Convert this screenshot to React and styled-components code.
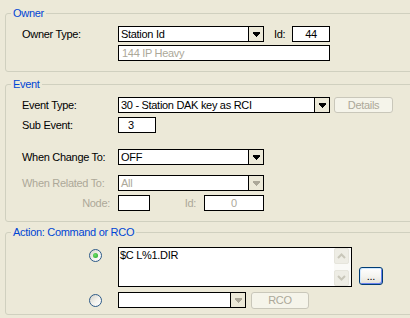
import React from 'react';
import styled, { createGlobalStyle, css } from 'styled-components';

const GlobalStyle = createGlobalStyle`
  html, body { margin: 0; padding: 0; background: #ECE9D8; overflow: hidden; }
  body {
    font-family: "Liberation Sans", Arial, sans-serif;
    font-size: 11px;
    letter-spacing: -0.3px;
    color: #000;
  }
  #root { width: 410px; height: 318px; overflow: hidden; }
`;

const Form = styled.div`
  display: flex;
  flex-direction: column;
  padding-top: 7px;
  width: 425px;
`;

const Group = styled.fieldset`
  box-sizing: border-box;
  width: 420px;
  min-width: 0;
  margin: ${(p) => p.$mt}px 0 0 5px;
  padding: ${(p) => p.$pt}px 0 ${(p) => p.$pb}px 0;
  border: 1px solid #D0D0BF;
  border-radius: 3px;
`;

const Legend = styled.legend`
  color: #0046D5;
  padding: 0 2px;
  margin-left: 5px;
  line-height: 13px;
  height: 13px;
`;

const Body = styled.div`
  display: flex;
  flex-direction: column;
  padding-left: 16px;
`;

const Row = styled.div`
  display: flex;
  align-items: ${(p) => p.$align || 'center'};
  height: ${(p) => p.$h || 16}px;
  margin-top: ${(p) => p.$mt || 0}px;
`;

const Label = styled.span`
  flex: none;
  box-sizing: border-box;
  width: ${(p) => p.$w || 96}px;
  padding-left: ${(p) => p.$pl || 0}px;
  padding-right: ${(p) => p.$pr || 0}px;
  text-align: ${(p) => (p.$right ? 'right' : 'left')};
  color: ${(p) => (p.$disabled ? '#ACA899' : '#000')};
  white-space: nowrap;
  line-height: 13px;
`;

const TextBox = styled.input`
  flex: none;
  box-sizing: border-box;
  width: ${(p) => p.$w}px;
  height: 16px;
  margin: 0;
  padding: 0 0 0 ${(p) => p.$pl || 0}px;
  border: 1px solid #000;
  border-radius: 0;
  background: #fff;
  font-family: inherit;
  font-size: 11px;
  letter-spacing: inherit;
  color: ${(p) => (p.$disabled ? '#ACA899' : '#000')};
  text-align: ${(p) => p.$align || 'left'};
  outline: none;
`;

const ComboBox = styled.div`
  flex: none;
  box-sizing: border-box;
  width: ${(p) => p.$w}px;
  height: 16px;
  border: 1px solid #000;
  background: #fff;
  display: flex;
`;

const ComboText = styled.span`
  flex: 1;
  min-width: 0;
  padding-left: 2px;
  line-height: 14px;
  white-space: nowrap;
  overflow: hidden;
  color: ${(p) => (p.$disabled ? '#ACA899' : '#000')};
`;

const ArrowBox = styled.span`
  flex: none;
  width: 14px;
  border-left: 1px solid #000;
  background: #ECE9D8;
  display: flex;
  align-items: center;
  justify-content: center;
`;

const Button = styled.button`
  flex: none;
  box-sizing: border-box;
  width: ${(p) => p.$w}px;
  height: ${(p) => p.$h || 16}px;
  margin: 0 0 ${(p) => p.$mb || 0}px ${(p) => p.$ml || 0}px;
  align-self: ${(p) => p.$self || 'auto'};
  padding: 0;
  border-radius: 3px;
  font-family: inherit;
  font-size: 11px;
  letter-spacing: inherit;
  line-height: 12px;
  ${(p) =>
    p.disabled
      ? css`
          border: 1px solid #C9C7BA;
          background: #F5F4EA;
          color: #ACA899;
        `
      : css`
          border: 1px solid #003C74;
          background: linear-gradient(#FFFFFF, #F4F3EE 55%, #E3E0D6);
          color: #000;
          box-shadow: inset 1px 1px 0 #CEE7FF, inset -1px -1px 0 #6982EE;
        `}
`;

const RadioCell = styled.span`
  flex: none;
  box-sizing: border-box;
  width: 96px;
  display: flex;
  justify-content: flex-end;
  padding-right: 16px;
  margin-top: ${(p) => p.$mt || 0}px;
`;

const Radio = styled.span`
  box-sizing: border-box;
  width: 13px;
  height: 13px;
  border-radius: 50%;
  border: 1px solid #2C5A88;
  background: linear-gradient(135deg, #D4D2C8 0%, #F4F3EE 55%, #FFFFFF 100%);
  display: flex;
  align-items: center;
  justify-content: center;
  &::after {
    content: '';
    display: ${(p) => (p.$checked ? 'block' : 'none')};
    width: 5px;
    height: 5px;
    border-radius: 50%;
    background: radial-gradient(circle at 40% 40%, #6FE06B, #21A121);
  }
`;

const MemoBox = styled.div`
  flex: none;
  box-sizing: border-box;
  width: 234px;
  height: 40px;
  border: 1px solid #000;
  background: #fff;
  display: flex;
`;

const MemoText = styled.div`
  flex: 1;
  padding: 1px 0 0 1px;
  line-height: 13px;
`;

const ScrollBar = styled.div`
  flex: none;
  width: 17px;
  background: #FAFAF7;
  display: flex;
  flex-direction: column;
  justify-content: space-between;
`;

const ScrollButton = styled.div`
  box-sizing: border-box;
  width: 15px;
  height: 16px;
  border: 1px solid #E6E5DC;
  border-radius: 2px;
  background: #EEEDE5;
  display: flex;
  align-items: center;
  justify-content: center;
`;

const ComboArrow = ({ color }) => (
  <svg width="7" height="5" viewBox="0 0 7 5" shapeRendering="crispEdges">
    <path d="M0 0h7v2h-1v1h-1v1h-1v1h-1v-1h-1v-1h-1v-1h-1z" fill={color} />
  </svg>
);

const Chevron = ({ up }) => (
  <svg width="9" height="6" viewBox="0 0 9 6">
    <polyline
      points={up ? '1,5 4.5,1.5 8,5' : '1,1 4.5,4.5 8,1'}
      fill="none"
      stroke="#C9C7BA"
      strokeWidth="2"
    />
  </svg>
);

const Combo = ({ w, value, disabled }) => (
  <ComboBox $w={w}>
    <ComboText $disabled={disabled}>{value}</ComboText>
    <ArrowBox>
      <ComboArrow color={disabled ? '#ACA899' : '#000'} />
    </ArrowBox>
  </ComboBox>
);

export default function App() {
  return (
    <>
      <GlobalStyle />
      <Form>
        <Group $mt={0} $pt={6} $pb={10}>
          <Legend>Owner</Legend>
          <Body>
            <Row>
              <Label>Owner Type:</Label>
              <Combo w={146} value="Station Id" />
              <Label $w={28} $pl={10}>Id:</Label>
              <TextBox $w={38} $align="center" readOnly value="44" />
            </Row>
            <Row $mt={3}>
              <Label />
              <TextBox $w={212} $pl={3} $disabled readOnly value="144 IP Heavy" />
            </Row>
          </Body>
        </Group>

        <Group $mt={6} $pt={6} $pb={10}>
          <Legend>Event</Legend>
          <Body>
            <Row>
              <Label>Event Type:</Label>
              <Combo w={212} value="30 - Station DAK key as RCI" />
              <Button $w={59} $ml={4} disabled>Details</Button>
            </Row>
            <Row $mt={4}>
              <Label>Sub Event:</Label>
              <TextBox $w={38} $pl={9} readOnly value="3" />
            </Row>
            <Row $mt={16}>
              <Label>When Change To:</Label>
              <Combo w={146} value="OFF" />
            </Row>
            <Row $mt={10}>
              <Label $disabled>When Related To:</Label>
              <Combo w={146} value="All" disabled />
            </Row>
            <Row $mt={4}>
              <Label $right $pr={8} $disabled>Node:</Label>
              <TextBox $w={32} readOnly value="" />
              <Label $w={54} $right $pr={8} $disabled>Id:</Label>
              <TextBox $w={60} $align="center" $disabled readOnly value="0" />
            </Row>
          </Body>
        </Group>

        <Group $mt={4} $pt={8} $pb={6}>
          <Legend>Action: Command or RCO</Legend>
          <Body>
            <Row $h={40} $align="flex-start">
              <RadioCell $mt={2}>
                <Radio $checked />
              </RadioCell>
              <MemoBox>
                <MemoText>$C L%1.DIR</MemoText>
                <ScrollBar>
                  <ScrollButton>
                    <Chevron up />
                  </ScrollButton>
                  <ScrollButton>
                    <Chevron />
                  </ScrollButton>
                </ScrollBar>
              </MemoBox>
              <Button $w={24} $h={18} $ml={7} $mb={2} $self="flex-end">
                ...
              </Button>
            </Row>
            <Row $mt={5}>
              <RadioCell>
                <Radio />
              </RadioCell>
              <Combo w={128} value="" disabled />
              <Button $w={58} $h={17} $ml={5} disabled>RCO</Button>
            </Row>
          </Body>
        </Group>
      </Form>
    </>
  );
}
